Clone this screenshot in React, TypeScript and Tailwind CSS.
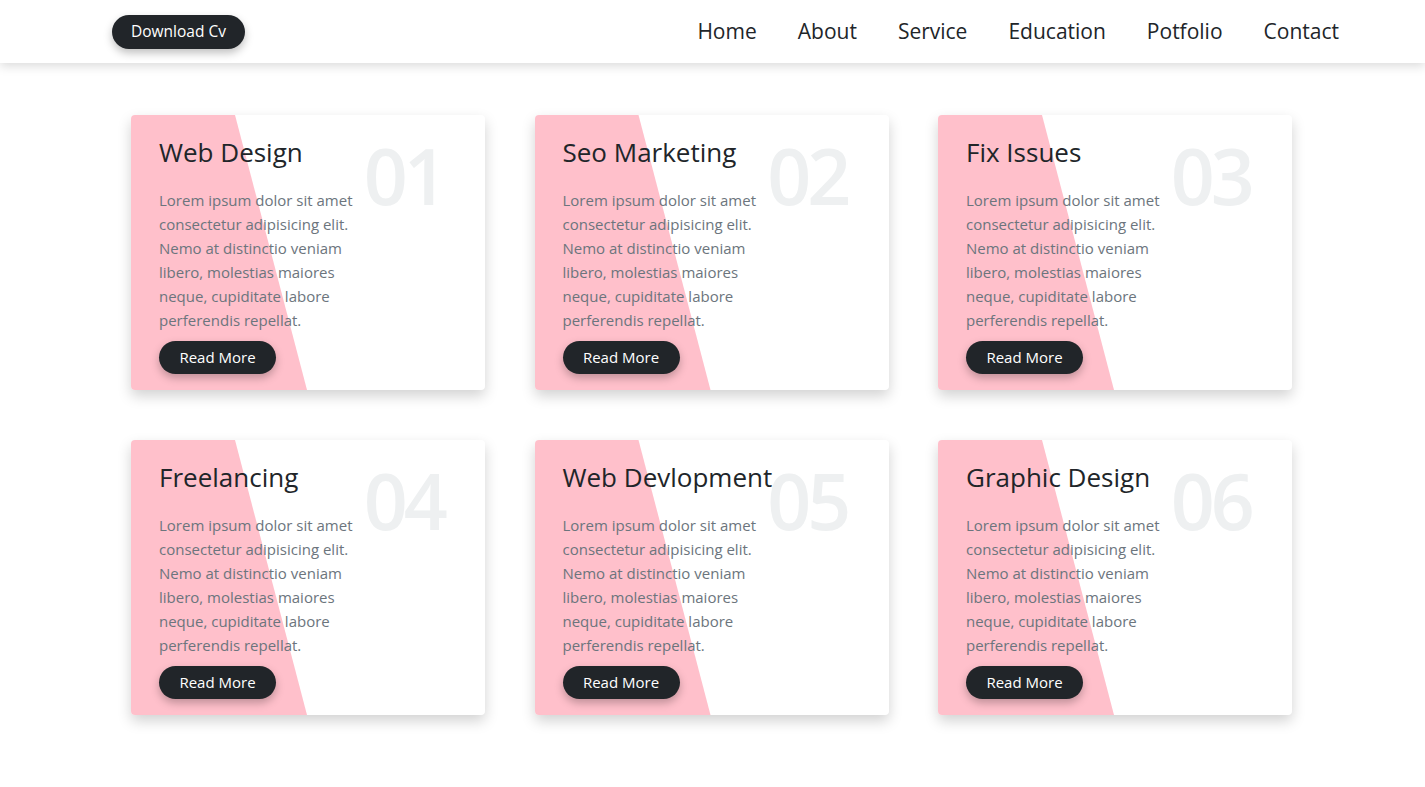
import React from "react";

const services = [
  { no: "01", title: "Web Design" },
  { no: "02", title: "Seo Marketing" },
  { no: "03", title: "Fix Issues" },
  { no: "04", title: "Freelancing" },
  { no: "05", title: "Web Devlopment" },
  { no: "06", title: "Graphic Design" },
];

const links = ["Home", "About", "Service", "Education", "Potfolio", "Contact"];

function ServiceCard({ no, title }: { no: string; title: string }) {
  return (
    <div className="relative h-[275px] w-[354px] overflow-hidden rounded bg-white shadow-[0_6px_14px_rgba(0,0,0,0.18)]">
      {/* pink slanted panel */}
      <div className="absolute inset-0 bg-[#ffc0cb] [clip-path:polygon(0_0,104px_0,176px_100%,0_100%)]" />
      <span className="absolute right-[41px] top-[22px] text-[77px] font-semibold leading-none tracking-[-0.05em] text-[#eef0f1]">
        {no}
      </span>
      <div className="relative px-[28px] pt-[18px]">
        <h3 className="text-[26px] leading-[38px] text-[#212529]">{title}</h3>
        <p className="mt-[17px] w-[215px] text-[15px] leading-[24px] text-[#6c757d]">
          Lorem ipsum dolor sit amet consectetur adipisicing elit. Nemo at distinctio veniam libero, molestias maiores neque, cupiditate labore perferendis repellat.
        </p>
        <button className="mt-[9px] h-[33px] w-[117px] rounded-full bg-[#212529] text-[15px] text-white shadow-[0_4px_8px_rgba(0,0,0,0.25)]">
          Read More
        </button>
      </div>
    </div>
  );
}

export default function App() {
  return (
    <div className="min-h-[787px] bg-white font-['Open_Sans',sans-serif]">
      <header className="relative z-10 flex h-[63px] items-center justify-between bg-white pl-[112px] pr-[86px] shadow-[0_3px_10px_rgba(0,0,0,0.15)]">
        <button className="h-[34px] w-[133px] rounded-full bg-[#212529] text-[15.5px] text-white shadow-[0_4px_8px_rgba(0,0,0,0.25)]">
          Download Cv
        </button>
        <nav className="flex gap-[41px] text-[21px] text-[#212529]">
          {links.map((l) => (
            <a key={l} href="#">
              {l}
            </a>
          ))}
        </nav>
      </header>
      <main className="grid grid-cols-[354px_354px_354px] justify-start gap-x-[49.5px] gap-y-[50px] pl-[131px] pt-[52px]">
        {services.map((s) => (
          <ServiceCard key={s.no} {...s} />
        ))}
      </main>
    </div>
  );
}
